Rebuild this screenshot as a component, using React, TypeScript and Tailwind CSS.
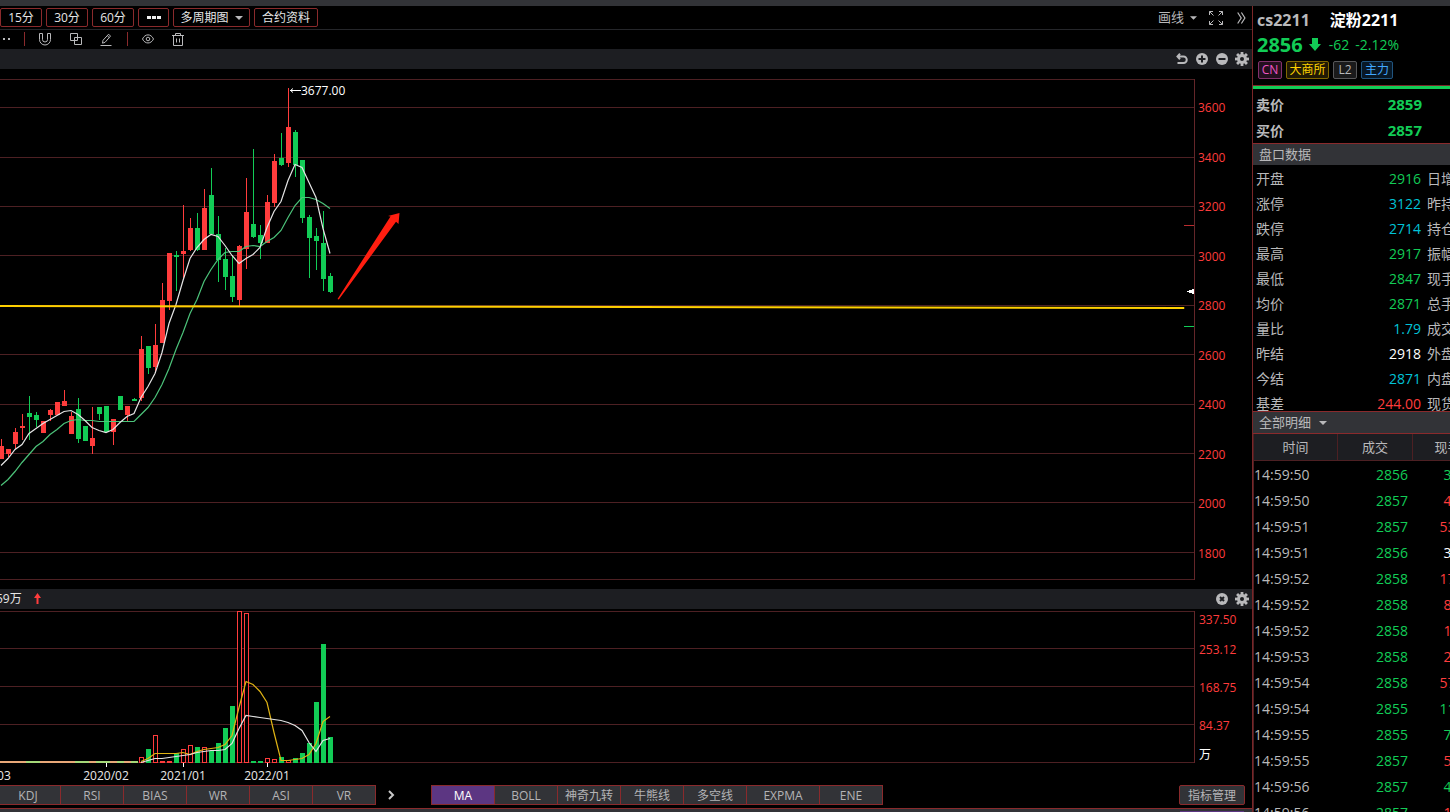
import { useState } from "react";

const RED = "#ff3c3c";
const GREEN = "#12cc56";

// [direction, body top, body bottom, wick top, wick bottom]
const candles: [string, number, number, number, number][] = [
  ["up", 446, 459, 439, 459],
  ["up", 449, 454, 449, 457],
  ["up", 432, 444, 428, 449],
  ["up", 426, 428, 414, 440],
  ["down", 413, 417, 396, 440],
  ["down", 415, 420, 412, 427],
  ["up", 421, 433, 421, 433],
  ["up", 410, 415, 409, 421],
  ["up", 402, 415, 402, 415],
  ["up", 401, 406, 390, 406],
  ["up", 416, 434, 412, 434],
  ["down", 409, 439, 398, 443],
  ["down", 426, 441, 426, 441],
  ["up", 438, 446, 407, 454],
  ["down", 407, 414, 407, 420],
  ["down", 406, 432, 406, 432],
  ["up", 419, 432, 419, 445],
  ["down", 396, 410, 396, 410],
  ["up", 406, 415, 406, 421],
  ["down", 399, 401, 398, 401],
  ["up", 349, 398, 336, 401],
  ["down", 346, 368, 346, 374],
  ["up", 345, 367, 324, 373],
  ["up", 300, 343, 283, 343],
  ["up", 253, 301, 253, 310],
  ["down", 255, 257, 251, 291],
  ["up", 251, 254, 205, 278],
  ["up", 228, 250, 218, 251],
  ["down", 228, 250, 213, 251],
  ["up", 208, 250, 189, 250],
  ["down", 195, 234, 168, 234],
  ["down", 234, 260, 216, 282],
  ["down", 259, 277, 248, 290],
  ["down", 276, 297, 255, 302],
  ["up", 246, 300, 245, 306],
  ["up", 212, 249, 178, 269],
  ["down", 224, 237, 149, 238],
  ["down", 235, 243, 225, 259],
  ["up", 202, 243, 195, 243],
  ["up", 161, 203, 154, 207],
  ["down", 158, 165, 133, 166],
  ["up", 127, 163, 88, 167],
  ["down", 132, 165, 130, 177],
  ["down", 160, 218, 160, 223],
  ["down", 217, 238, 215, 278],
  ["down", 236, 241, 228, 270],
  ["down", 243, 279, 211, 291],
  ["down", 276, 292, 273, 293],
];

const maFast = [
  465, 458, 449, 444, 433, 428, 423, 419, 415, 411, 410, 414, 420, 427, 430, 432,
  429, 422, 416, 413, 397, 386, 373, 352, 323, 304, 280, 258, 247, 239, 234, 236,
  245, 255, 263, 258, 254, 247, 227, 211, 201, 180, 164, 167, 182, 197, 228, 253,
];

const maSlow = [
  485, 479, 471, 462, 454, 446, 441, 434, 429, 423, 420, 419, 420, 420, 421, 421,
  421, 421, 421, 421, 414, 407, 397, 384, 368, 349, 332, 313, 299, 281, 269, 259,
  252, 251, 251, 246, 245, 246, 241, 237, 230, 217, 205, 197, 197, 199, 203, 208,
];

// tops of the volume bars, starting at candle 20
const volumes = [
  757, 749, 735, 761, 761, 753, 749, 745, 747, 747, 751, 743, 728, 706, 611, 613,
  761, 761, 758, 759, 757, 760, 758, 753, 743, 702, 644, 737,
];
const volumeUp = [0, 2, 3, 4, 6, 7, 9, 14, 15, 18, 19, 21];

const volFast = [
  761, 758, 753, 753, 753, 753, 752, 754, 751, 749, 748, 747, 744, 735, 707, 681,
  684, 691, 702, 732, 760, 760, 759, 758, 754, 743, 721, 716,
];
const volSlow = [
  762, 760, 758, 758, 757, 756, 755, 754, 752, 751, 750, 750, 749, 743, 728, 715,
  716, 717, 718, 719, 720, 722, 725, 730, 742, 751, 740, 738,
];

const gridY = [107, 157, 206, 255, 305, 354, 404, 453, 502, 552];
const prices = ["3600", "3400", "3200", "3000", "2800", "2600", "2400", "2200", "2000", "1800"];

const quotes = [
  ["开盘", "2916", "text-[#12cc56]", "日增"],
  ["涨停", "3122", "text-[#00c3d7]", "昨持"],
  ["跌停", "2714", "text-[#00c3d7]", "持仓"],
  ["最高", "2917", "text-[#12cc56]", "振幅"],
  ["最低", "2847", "text-[#12cc56]", "现手"],
  ["均价", "2871", "text-[#12cc56]", "总手"],
  ["量比", "1.79", "text-[#00c3d7]", "成交"],
  ["昨结", "2918", "text-white", "外盘"],
  ["今结", "2871", "text-[#00c3d7]", "内盘"],
  ["基差", "244.00", "text-[#ff3c3c]", "现货"],
];

const trades = [
  ["14:59:50", "2856", "3", "text-[#12cc56]"],
  ["14:59:50", "2857", "4", "text-[#ff3c3c]"],
  ["14:59:51", "2857", "53", "text-[#ff3c3c]"],
  ["14:59:51", "2856", "3", "text-white"],
  ["14:59:52", "2858", "17", "text-[#ff3c3c]"],
  ["14:59:52", "2858", "8", "text-[#ff3c3c]"],
  ["14:59:52", "2858", "1", "text-[#ff3c3c]"],
  ["14:59:53", "2858", "2", "text-[#ff3c3c]"],
  ["14:59:54", "2858", "57", "text-[#ff3c3c]"],
  ["14:59:54", "2855", "11", "text-[#12cc56]"],
  ["14:59:55", "2855", "7", "text-[#12cc56]"],
  ["14:59:55", "2857", "5", "text-[#ff3c3c]"],
  ["14:59:56", "2857", "4", "text-[#12cc56]"],
  ["14:59:56", "2857", "1", "text-[#ff3c3c]"],
];

const toPoints = (ys: number[], start = 0) =>
  ys.map((y, i) => `${(i + start) * 7 + 1},${y + 0.5}`).join(" ");

function Caret() {
  return (
    <svg width="8" height="4" viewBox="0 0 8 4" fill="#b9b9bb">
      <path d="M0 0h8L4 4z" />
    </svg>
  );
}

function GearIcon() {
  return (
    <svg width="14" height="14" viewBox="0 0 14 14">
      <g fill="#b9b9bb">
        {[0, 45, 90, 135].map((a) => (
          <rect key={a} x="5.6" y="0" width="2.8" height="14" transform={`rotate(${a} 7 7)`} />
        ))}
        <circle cx="7" cy="7" r="4.9" />
      </g>
      <circle cx="7" cy="7" r="2" fill="#1d1e22" />
    </svg>
  );
}

function RoundIcon({ d }: { d: string }) {
  return (
    <svg width="12" height="12" viewBox="0 0 12 12">
      <circle cx="6" cy="6" r="6" fill="#b9b9bb" />
      <path d={d} stroke="#1d1e22" strokeWidth="2" />
    </svg>
  );
}

function TopButton({ children, className }: { children: React.ReactNode; className: string }) {
  return (
    <button
      className={`flex h-[19px] shrink-0 items-center justify-center gap-1.5 rounded-xs border border-[#8a2a2c] text-xs leading-none text-[#e6e6e6] ${className}`}
    >
      {children}
    </button>
  );
}

function Toolbar() {
  return (
    <div className="flex h-6 items-center gap-1 border-b border-[#25262a]">
      <TopButton className="w-[42px]">15分</TopButton>
      <TopButton className="w-[42px]">30分</TopButton>
      <TopButton className="w-[42px]">60分</TopButton>
      <TopButton className="w-[31px]">
        <svg width="14" height="3" fill="#f0f0f0" aria-label="更多">
          <path d="M0 0h4v3H0zM5 0h4v3H5zM10 0h4v3h-4z" />
        </svg>
      </TopButton>
      <TopButton className="w-[77px]">
        多周期图 <Caret />
      </TopButton>
      <TopButton className="w-16">合约资料</TopButton>
      <div className="ml-auto flex items-center pr-1.5">
        <button className="flex items-center gap-1.5 text-[13px] leading-none text-[#b9b9bb]">
          画线
          <svg width="7" height="4" viewBox="0 0 8 4" fill="#b9b9bb">
            <path d="M0 0h8L4 4z" />
          </svg>
        </button>
        <button className="ml-3" aria-label="全屏">
          <svg width="14" height="14" viewBox="0 0 14 14" fill="none" stroke="#b9b9bb">
            <path d="M.5 4V.5H4M.5.5l4 4M10 .5h3.5V4M13.5.5l-4 4M.5 10v3.5H4M.5 13.5l4-4M10 13.5h3.5V10M13.5 13.5l-4-4" />
          </svg>
        </button>
        <button className="ml-3.5" aria-label="收起">
          <svg width="9" height="12" viewBox="0 0 9 12" fill="none" stroke="#b9b9bb" strokeWidth="1.2">
            <path d="M.7.5l3.5 5.5-3.5 5.5M4.4.5L7.9 6l-3.5 5.5" />
          </svg>
        </button>
      </div>
    </div>
  );
}

function DrawTools() {
  return (
    <div className="flex h-[19px] items-center pb-px text-[#b9b9bb]">
      <svg width="12" height="4" fill="#b9b9bb">
        <path d="M3 1h2v2H3zM8 1h2v2H8z" />
      </svg>
      <span className="ml-3 h-3.5 w-px bg-[#8a2a2c]" />
      <button className="ml-3.5" aria-label="磁铁">
        <svg width="12" height="14" viewBox="0 0 12 14" fill="none" stroke="currentColor">
          <path d="M.5 1.500h3v6a2.500 2.500 0 0 0 5 0v-6h3v6a5.500 5.500 0 0 1-11 0z" />
        </svg>
      </button>
      <button className="ml-[19px]" aria-label="复制">
        <svg width="12" height="12" viewBox="0 0 12 12" fill="none" stroke="currentColor">
          <path d="M.5.5h7v7h-7zM4.500 4.500h7v7h-7z" />
        </svg>
      </button>
      <button className="ml-[18px]" aria-label="画笔">
        <svg width="12" height="13" viewBox="0 0 12 13" fill="none" stroke="currentColor">
          <path d="M.5 12.500h11M2.500 10.200l.5-2.900L8.600 1.200l1.900 1.900-5.500 6.300zM7.300 2.700l1.900 1.800" />
        </svg>
      </button>
      <span className="ml-[15px] h-3.5 w-px bg-[#8a2a2c]" />
      <button className="ml-3.5" aria-label="显示">
        <svg width="12" height="10" viewBox="0 0 12 10" fill="none" stroke="currentColor">
          <path d="M.5 5C3-.5 9-.5 11.500 5 9 10.300 3 10.300.5 5z" />
          <circle cx="6" cy="5" r="1.800" />
        </svg>
      </button>
      <button className="ml-[18px]" aria-label="删除">
        <svg width="12" height="13" viewBox="0 0 12 13" fill="none" stroke="currentColor">
          <path d="M0 2.500h12M3.500 2.500v-2h5v2M1.500 2.500v10h9v-10M4.500 5.500v4M7.500 5.500v4" />
        </svg>
      </button>
    </div>
  );
}

function PriceChart() {
  return (
    <div className="flex h-[520px]">
      <svg className="h-full min-w-0 flex-1" aria-label="K线图">
        <g transform="translate(0 -69)">
          <g stroke="#4d2023" shapeRendering="crispEdges">
            {gridY.map((y) => (
              <line key={y} x1="0" x2="100%" y1={y + 0.5} y2={y + 0.5} />
            ))}
            <line x1="0" x2="100%" y1="79.5" y2="79.5" />
            <line x1="0" x2="100%" y1="579.5" y2="579.5" />
          </g>
          <svg x="100%" y="0" overflow="visible" shapeRendering="crispEdges">
            <rect x="-1" y="79" width="1" height="501" fill="#642629" />
            <rect x="-11" y="225" width="10" height="1" fill="#b92d2f" />
            <rect x="-11" y="326" width="10" height="1" fill={GREEN} />
            <path d="M-8 291.500l7-3v6z" fill="#fff" />
          </svg>
          <g shapeRendering="crispEdges">
            {candles.map(([dir, top, bottom, high, low], i) => (
              <g key={i} fill={dir === "up" ? RED : GREEN}>
                <rect x={i * 7 + 1} y={high} width="1" height={low - high} />
                <rect x={i * 7 - 1} y={top} width="5" height={bottom - top} />
              </g>
            ))}
          </g>
          <polyline points={toPoints(maSlow)} fill="none" stroke="#4cc37a" strokeWidth="1.200" />
          <polyline points={toPoints(maFast)} fill="none" stroke="#e4e4e4" strokeWidth="1.200" />
          <line x1="0" x2="99.100%" y1="306" y2="308" stroke="#ffd000" strokeWidth="2" />
          <path d="M337.500 299l53-82.500-2.500-.5 11.500-3-1 11-2.500-2.200L338.800 299.600z" fill="#ff1e10" />
          <path d="M290 90.500h11M293 88.500l-2.500 2 2.500 2" fill="none" stroke="#fff" />
          <text x="301" y="95" fill="#fff" fontSize="12">3677.00</text>
        </g>
      </svg>
      <div className="flex w-[57px] shrink-0 flex-col justify-between pt-[29px] pb-[25px] pl-[3px] text-xs text-[#ff3c3c]">
        {prices.map((p) => (
          <span key={p} className="h-5 leading-5">{p}</span>
        ))}
      </div>
    </div>
  );
}

function VolumeChart() {
  return (
    <div className="flex h-44">
      <svg className="h-full min-w-0 flex-1" aria-label="成交量">
        <g transform="translate(0 -609)">
          <g stroke="#4d2023" shapeRendering="crispEdges">
            {[611, 648, 686, 724, 762].map((y) => (
              <line key={y} x1="0" x2="100%" y1={y + 0.5} y2={y + 0.5} />
            ))}
          </g>
          <svg x="100%" y="0" overflow="visible">
            <rect x="-1" y="611" width="1" height="152" fill="#642629" />
          </svg>
          <g shapeRendering="crispEdges">
            {candles.slice(0, 20).map(([dir], i) => (
              <rect key={i} x={i * 7 - 2} y="761" width="7" height="2" fill={dir === "up" ? "#e8a878" : "#a5d878"} />
            ))}
            {volumes.map((top, i) => {
              const x = (i + 20) * 7 - 1;
              return volumeUp.includes(i) ? (
                <rect key={i} x={x + 0.5} y={top + 0.5} width="4" height={762 - top} fill="#000" stroke={RED} />
              ) : (
                <rect key={i} x={x} y={top} width="5" height={763 - top} fill={GREEN} />
              );
            })}
            <path d="M106.500 763v4M183.500 763v4M267.500 763v4" stroke="#fff" />
          </g>
          <polyline points={toPoints(volFast, 20)} fill="none" stroke="#e0b414" strokeWidth="1.200" />
          <polyline points={toPoints(volSlow, 20)} fill="none" stroke="#e4e4e4" strokeWidth="1.200" />
          <g fill="#e8e8e8" fontSize="12" textAnchor="middle">
            <text x="-12" y="780">2019/03</text>
            <text x="106" y="780">2020/02</text>
            <text x="183" y="780">2021/01</text>
            <text x="267" y="780">2022/01</text>
          </g>
        </g>
      </svg>
      <div className="flex w-[57px] shrink-0 flex-col pl-1 text-xs text-[#ff3c3c]">
        <span className="flex h-[22px] items-center">337.50</span>
        <span className="flex h-[38px] items-center">253.12</span>
        <span className="flex h-[38px] items-center">168.75</span>
        <span className="flex h-[38px] items-center">84.37</span>
        <span className="flex h-5 items-center text-white">万</span>
      </div>
    </div>
  );
}

function IndicatorTabs() {
  const [active, setActive] = useState("MA");
  const tabs = [
    ["MA", "w-[63px]"],
    ["BOLL", "w-[63px]"],
    ["神奇九转", "w-[63px]"],
    ["牛熊线", "w-[63px]"],
    ["多空线", "w-[63px]"],
    ["EXPMA", "w-[73px]"],
    ["ENE", "w-[63px]"],
  ];
  return (
    <div className="flex h-5 items-stretch text-xs leading-none text-[#b4b4b6]">
      <button className="w-[61px] border-y border-r border-[#8a2a2c] bg-[#323337] pt-px pr-1">KDJ</button>
      {["RSI", "BIAS", "WR", "ASI", "VR"].map((name) => (
        <button key={name} className="w-[63px] border-y border-r border-[#8a2a2c] bg-[#323337] pt-px">
          {name}
        </button>
      ))}
      <button className="mr-9 ml-3 flex w-[7px] items-center" aria-label="更多指标">
        <svg width="7" height="10" viewBox="0 0 7 10" fill="none" stroke="#c8c8c8" strokeWidth="2">
          <path d="M1 1l4 4-4 4" />
        </svg>
      </button>
      <div className="flex border-l border-[#8a2a2c]">
        {tabs.map(([name, width]) => (
          <button
            key={name}
            onClick={() => setActive(name)}
            className={`border-y border-r border-[#8a2a2c] pt-px ${width} ${
              active === name ? "bg-[#5c3682] text-white" : "bg-[#323337]"
            }`}
          >
            {name}
          </button>
        ))}
      </div>
      <button className="mr-[7px] ml-auto w-[66px] rounded-xs border border-[#8a2a2c] bg-[#323337] pt-px">
        指标管理
      </button>
    </div>
  );
}

function QuotePanel() {
  return (
    <aside className="flex w-[198px] shrink-0 flex-col overflow-hidden border-l border-[#7a2628] text-[#b9b9bb]">
      <div className="h-[79px] shrink-0 pl-1">
        <h1 className="flex h-7 items-center gap-5 text-base font-bold whitespace-nowrap">
          <span>cs2211</span>
          <span className="text-white">淀粉2211</span>
        </h1>
        <div className="flex h-[21px] items-center text-sm whitespace-nowrap text-[#12cc56]">
          <strong className="text-xl leading-5">2856</strong>
          <svg className="ml-1.5" width="12" height="13" viewBox="0 0 12 13" fill={GREEN}>
            <path d="M3 0h6v6h3l-6 7-6-7h3z" />
          </svg>
          <span className="ml-2">-62</span>
          <span className="ml-1.5">-2.12%</span>
        </div>
        <div className="mt-1.5 ml-px flex gap-1 text-xs leading-none">
          <span className="flex h-[18px] w-6 items-center justify-center rounded-xs border border-[#82306c] bg-[#24101f] text-[#ee55c4]">CN</span>
          <span className="flex h-[18px] w-[43px] items-center justify-center rounded-xs border border-[#806800] bg-[#201a04] text-[#ffd200]">大商所</span>
          <span className="flex h-[18px] w-6 items-center justify-center rounded-xs border border-[#58585a] bg-[#1a1a1b]">L2</span>
          <span className="flex h-[18px] w-8 items-center justify-center rounded-xs border border-[#20547e] bg-[#081826] text-[#41a8ff]">主力</span>
        </div>
      </div>
      <div className="h-1 shrink-0 border-t border-[#7a2628] bg-[#12cc56]" />
      <dl className="h-[54px] shrink-0 pt-[3px] pl-[3px] text-sm font-bold">
        <div className="flex h-[26px] w-[166px] items-center justify-between">
          <dt>卖价</dt>
          <dd className="text-[15px] text-[#12cc56]">2859</dd>
        </div>
        <div className="flex h-[26px] w-[166px] items-center justify-between">
          <dt>买价</dt>
          <dd className="text-[15px] text-[#12cc56]">2857</dd>
        </div>
      </dl>
      <h2 className="flex h-[22px] shrink-0 items-center border-t border-[#8a2a2c] bg-[#323337] pl-1.5 text-[13px]">
        盘口数据
      </h2>
      <dl className="h-[246px] shrink-0 overflow-hidden pt-px pl-[3px] text-sm">
        {quotes.map(([label, value, color, next]) => (
          <div key={label} className="flex h-[25px] items-center whitespace-nowrap">
            <dt className="w-10 shrink-0">{label}</dt>
            <dd className={`w-[125px] shrink-0 text-right ${color}`}>{value}</dd>
            <dt className="ml-1.5">{next}</dt>
          </div>
        ))}
      </dl>
      <button className="flex h-[23px] shrink-0 items-center gap-2 border-y border-[#8a2a2c] bg-[#323337] pl-1.5 text-[13px]">
        全部明细 <Caret />
      </button>
      <div className="min-h-0 flex-1 overflow-hidden border-l border-[#4d2023]">
        <table className="w-[228px] table-fixed border-separate border-spacing-0 text-sm">
          <colgroup>
            <col className="w-[84px]" />
            <col className="w-[75px]" />
            <col className="w-[69px]" />
          </colgroup>
          <thead className="bg-[#1d1e22] text-[13px]">
            <tr className="h-[27px]">
              <th className="border-r border-b border-[#4d2023] p-0 font-normal">时间</th>
              <th className="border-r border-b border-[#4d2023] p-0 font-normal">成交</th>
              <th className="border-b border-[#4d2023] p-0 font-normal">现手</th>
            </tr>
          </thead>
          <tbody>
            {trades.map(([time, price, lots, color], i) => (
              <tr key={i} className="h-[26px]">
                <td className="p-0 pt-0.5 leading-5">{time}</td>
                <td className="p-0 pt-0.5 pr-[5px] text-right leading-5 text-[#12cc56]">{price}</td>
                <td className={`p-0 pt-0.5 text-center leading-5 ${color}`}>{lots}</td>
              </tr>
            ))}
          </tbody>
        </table>
      </div>
    </aside>
  );
}

export default function App() {
  return (
    <div className="flex h-screen flex-col overflow-hidden bg-black font-['Open_Sans','Noto_Sans_CJK_SC',sans-serif]">
      <div className="h-1.5 shrink-0 bg-[#323337]" />
      <div className="flex min-h-0 flex-1">
        <main className="flex min-w-0 flex-1 flex-col">
          <Toolbar />
          <DrawTools />
          <div className="flex h-5 items-center justify-end gap-2 bg-[#1d1e22] pr-[3px]">
            <button aria-label="撤销">
              <svg width="12" height="12" viewBox="0 0 12 12" fill="none" stroke="#b9b9bb" strokeWidth="2">
                <path d="M2 3.500h5.500a3.200 3.200 0 0 1 0 6.500H1.500M4 .8L1.500 3.500 4 6.200" />
              </svg>
            </button>
            <button aria-label="放大">
              <RoundIcon d="M6 2.500v7M2.500 6h7" />
            </button>
            <button aria-label="缩小">
              <RoundIcon d="M2.500 6h7" />
            </button>
            <button className="-ml-px" aria-label="设置">
              <GearIcon />
            </button>
          </div>
          <PriceChart />
          <div className="flex h-5 items-center bg-[#1d1e22] pr-[3px]">
            <span className="-ml-1 text-xs text-[#e6e6e6]">59万</span>
            <svg className="ml-3" width="7" height="12" viewBox="0 0 7 12" fill={RED}>
              <path d="M3.500 0L7 5H4.500v6h-2V5H0z" />
            </svg>
            <button className="ml-auto" aria-label="关闭">
              <RoundIcon d="M4 4l4 4M8 4l-4 4" />
            </button>
            <button className="ml-[7px]" aria-label="设置">
              <GearIcon />
            </button>
          </div>
          <VolumeChart />
          <IndicatorTabs />
          <div className="mt-[3px] flex flex-1 border-t border-[#8a2a2c] bg-[#323337] pt-0.5">
            <span className="mr-2 ml-auto w-16 bg-[#5c3682]" />
          </div>
        </main>
        <QuotePanel />
      </div>
    </div>
  );
}
